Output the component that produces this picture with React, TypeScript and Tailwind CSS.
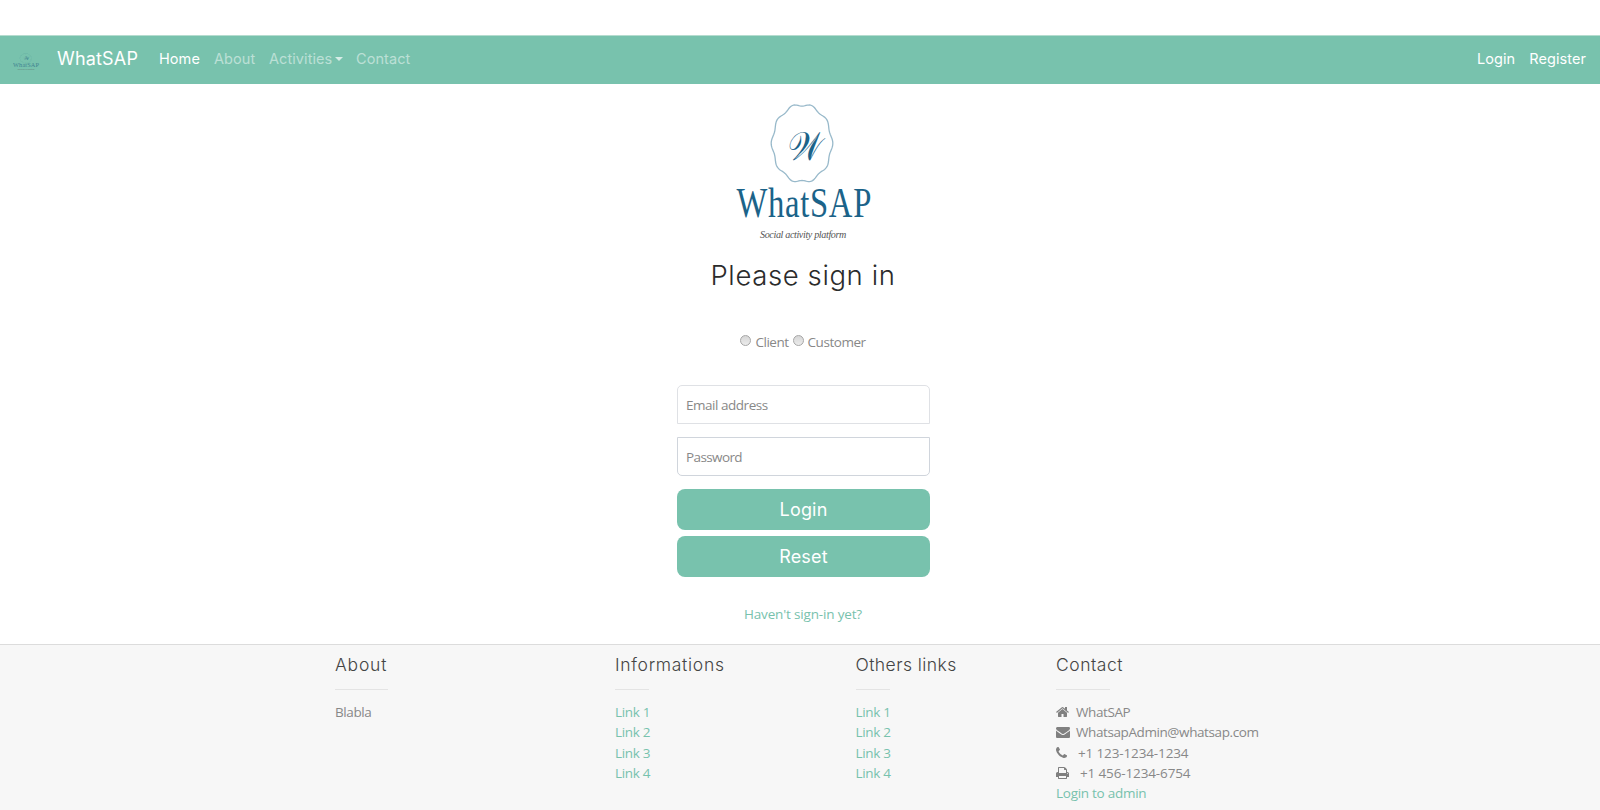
import type { ReactNode } from 'react';

const badge = Array.from({ length: 181 }, (_, i) => {
  const t = (i * 2 * Math.PI) / 180;
  const f = 0.962 + 0.032 * Math.cos(10 * t);
  return `${i ? 'L' : 'M'}${(71 + 31 * f * Math.cos(t)).toFixed(2)} ${(43.3 + 40 * f * Math.sin(t)).toFixed(2)}`;
}).join('') + 'Z';

function Logo({ className, tint }: { className: string; tint: string }) {
  return (
    <svg viewBox="0 0 145 145" preserveAspectRatio="none" className={className} aria-label="WhatSAP">
      <path d={badge} fill="none" stroke={tint} strokeOpacity="0.45" strokeWidth="1.3" />
      <text transform="translate(55.500 60) skewX(-4) scale(1 1.25)" fontSize="32" fill={tint} fontFamily="DejaVu Serif, DejaVu Sans, serif" textLength="34" lengthAdjust="spacingAndGlyphs">𝒲</text>
      <text transform="translate(5.500 116.500) scale(0.76 1)" fontSize="43" fill={tint} fontFamily="Liberation Serif, serif" textLength="177" lengthAdjust="spacing">WhatSAP</text>
      <text x="29" y="138" fontSize="11" fill="#555" fontFamily="Liberation Serif, serif" fontStyle="italic" textLength="86" lengthAdjust="spacingAndGlyphs">Social activity platform</text>
    </svg>
  );
}

const icons = {
  home: 'M1472 992v480q0 26-19 45t-45 19h-384v-384h-256v384h-384q-26 0-45-19t-19-45v-480q0-1 .5-3t.5-3l575-474 575 474q1 2 1 6zm223-69l-62 74q-8 9-21 11h-3q-13 0-21-7l-692-577-692 577q-12 8-24 7-13-2-21-11l-62-74q-8-10-7-23.5t11-21.5l719-599q32-26 76-26t76 26l244 204v-195q0-14 9-23t23-9h192q14 0 23 9t9 23v408l219 182q10 8 11 21.5t-7 23.5z',
  mail: 'M1792 710v794q0 66-47 113t-113 47h-1472q-66 0-113-47t-47-113v-794q44 49 101 87 362 246 497 345 57 42 92.5 65.5t94.5 48 110 24.5h2q51 0 110-24.5t94.5-48 92.5-65.5q170-123 498-345 57-39 100-87zm0-294q0 79-49 151t-122 123q-376 261-468 325-10 7-42.5 31t-54 38.8-52 33.2-57.5 27-50 9h-2q-23 0-50-9t-57.5-27-52-33.2-54-38.8-42.5-31q-91-64-262-182.5t-205-142.5q-62-42-117-115.5t-55-136.5q0-78 41.5-130t118.5-52h1472q65 0 112.5 47t47.5 113z',
  phone: 'M1600 1240q0 27-10 70.5t-21 68.5q-21 50-122 106-94 51-186 51-27 0-52.5-3.5t-57.5-12.5-47.5-14.5-55.5-20.5-49-18q-98-35-175-83-128-79-264.5-215.5t-215.5-264.5q-48-77-83-175-3-9-18-49t-20.5-55.5-14.5-47.5-12.5-57.5-3.5-52.5q0-92 51-186 56-101 106-122 25-11 68.5-21t70.5-10q14 0 21 3 18 6 53 76 11 19 30 54t35 63.5 31 53.5q3 4 17.5 25t21.5 35.5 7 28.5q0 20-28.5 50t-62 55-62 53-28.5 46q0 9 5 22.5t8.5 20.5 14 24 11.5 19q76 137 174 235t235 174q2 1 19 11.5t24 14 20.5 8.5 22.5 5q18 0 46-28.5t53-62 55-62 50-28.5q14 0 28.5 7t35.5 21.5 25 17.5q25 15 53.5 31t63.5 35 54 30q70 35 76 53 3 7 3 21z',
  print: 'M448 1536h896v-256h-896v256zm0-640h896v-384h-160q-40 0-68-28t-28-68v-160h-640v640zm1152 64q0-26-19-45t-45-19-45 19-19 45 19 45 45 19 45-19 19-45zm128 0v416q0 13-9.5 22.5t-22.5 9.5h-224v160q0 40-28 68t-68 28h-960q-40 0-68-28t-28-68v-160h-224q-13 0-22.5-9.5t-9.5-22.5v-416q0-79 56.5-135.5t135.5-56.5h64v-544q0-40 28-68t68-28h672q40 0 88 20t76 48l152 152q28 28 48 76t20 88v256h64q79 0 135.5 56.5t56.5 135.5z',
};

function Row({ icon, view, gap, width, children }: { icon: string; view: string; gap: string; width: string; children: ReactNode }) {
  return (
    <div className={`flex items-center ${gap}`}>
      <svg viewBox={view} className={`h-[14px] shrink-0 ${width}`} fill="#808080"><path d={icon} /></svg>
      {children}
    </div>
  );
}

function Column({ title, rule, tracking, children }: { title: string; rule: string; tracking: string; children: ReactNode }) {
  return (
    <div>
      <h2 className={`h-[21px] font-['Inter',sans-serif] text-[17.5px] leading-[21px] font-light text-[#444] ${tracking}`}>{title}</h2>
      <div className={`mt-[14px] h-px bg-[#e4e4e4] ${rule}`} />
      <div className="mt-[12px] leading-[20.3px]">{children}</div>
    </div>
  );
}

function Links() {
  return (
    <div className="flex flex-col tracking-[-0.025em] text-[#78c2ad]">
      {[1, 2, 3, 4].map((n) => <a key={n}>Link {n}</a>)}
    </div>
  );
}

function Radio({ label }: { label: string }) {
  return (
    <label className="flex items-center gap-[4px]">
      <span className="mb-[3px] size-[11px] rounded-full border border-[#a6a6a6] bg-linear-to-b from-[#d6d6d6] to-[#ececec]" />
      <span>{label}</span>
    </label>
  );
}

export default function App() {
  return (
    <div className="flex h-[810px] w-full flex-col overflow-hidden bg-white pt-[35px] font-['Open_Sans',sans-serif] text-[13.5px] tracking-[-0.03em] whitespace-nowrap text-[#888]">
      <nav className="flex h-[49px] shrink-0 items-center border-t border-[#b5dccf] bg-[#78c2ad] pr-[14px] pb-[2px] font-['Inter',sans-serif] text-[14.5px] tracking-[0.005em] text-white">
        <Logo className="mt-[6px] ml-[12px] h-[18px] w-[28px] opacity-70" tint="#2b6a86" />
        <span className="ml-[17px] w-[102px] text-[18px] leading-[22px] tracking-[0.01em]">WhatSAP</span>
        <a className="w-[55px]">Home</a>
        <a className="w-[55px] text-white/50">About</a>
        <a className="flex w-[87px] items-center gap-[3px] text-white/50">
          Activities
          <span className="border-x-[4px] border-t-[4px] border-x-transparent border-t-white/70" />
        </a>
        <a className="text-white/50">Contact</a>
        <a className="ml-auto">Login</a>
        <a className="ml-[14px]">Register</a>
      </nav>

      <main className="flex h-[560px] shrink-0 flex-col items-center pl-[6px]">
        <Logo className="mt-[16px] size-[145px] shrink-0" tint="#1b6389" />
        <h1 className="mt-[13px] font-['Inter',sans-serif] text-[27.5px] leading-[34px] font-light tracking-[0.022em] text-[#2b2b2b]">Please sign in</h1>
        <div className="mt-[40px] flex h-[20px] items-center gap-[4px] tracking-[-0.035em]">
          <Radio label="Client" />
          <Radio label="Customer" />
        </div>
        <div className="mt-[33px] ml-px flex w-[253px] flex-col">
          <input placeholder="Email address" className="h-[39px] rounded-t-[5px] border border-[#dfe1e5] px-[8px] tracking-[-0.035em] placeholder:text-[#888]" />
          <input placeholder="Password" className="mt-[13px] h-[39px] rounded-b-[5px] border border-[#d0d5dc] px-[8px] tracking-[-0.045em] placeholder:text-[#888]" />
          <button className="mt-[13px] h-[41px] rounded-[8px] bg-[#78c2ad] font-['Inter',sans-serif] text-[18px] tracking-[0.01em] text-white">Login</button>
          <button className="mt-[6px] h-[41px] rounded-[8px] bg-[#78c2ad] font-['Inter',sans-serif] text-[18px] tracking-[0.01em] text-white">Reset</button>
        </div>
        <a className="mt-[27px] leading-[20px] tracking-[-0.012em] text-[#78c2ad]">Haven't sign-in yet?</a>
      </main>

      <footer className="grid flex-1 grid-cols-[280px_240.5px_200.5px_1fr] border-t border-[#dcdcdc] bg-[#f7f7f7] pt-[9px] pl-[335px]">
        <Column title="About" rule="w-[53px]" tracking="tracking-[0.045em]">Blabla</Column>
        <Column title="Informations" rule="w-[34px]" tracking="tracking-[0.04em]"><Links /></Column>
        <Column title="Others links" rule="w-[34px]" tracking="tracking-[0.025em]"><Links /></Column>
        <Column title="Contact" rule="w-[54px]" tracking="tracking-[0.03em]">
          <Row icon={icons.home} view="64 0 1664 1792" width="w-[13px]" gap="gap-[7px]">WhatSAP</Row>
          <Row icon={icons.mail} view="0 0 1792 1792" width="w-[14px]" gap="gap-[6px]">WhatsapAdmin@whatsap.com</Row>
          <Row icon={icons.phone} view="192 0 1408 1792" width="w-[11px]" gap="gap-[11px]"><span className="tracking-[-0.01em]">+1 123-1234-1234</span></Row>
          <Row icon={icons.print} view="64 0 1664 1792" width="w-[13px]" gap="gap-[11px]"><span className="tracking-[-0.01em]">+1 456-1234-6754</span></Row>
          <a className="tracking-[-0.02em] text-[#78c2ad]">Login to admin</a>
        </Column>
      </footer>
    </div>
  );
}
